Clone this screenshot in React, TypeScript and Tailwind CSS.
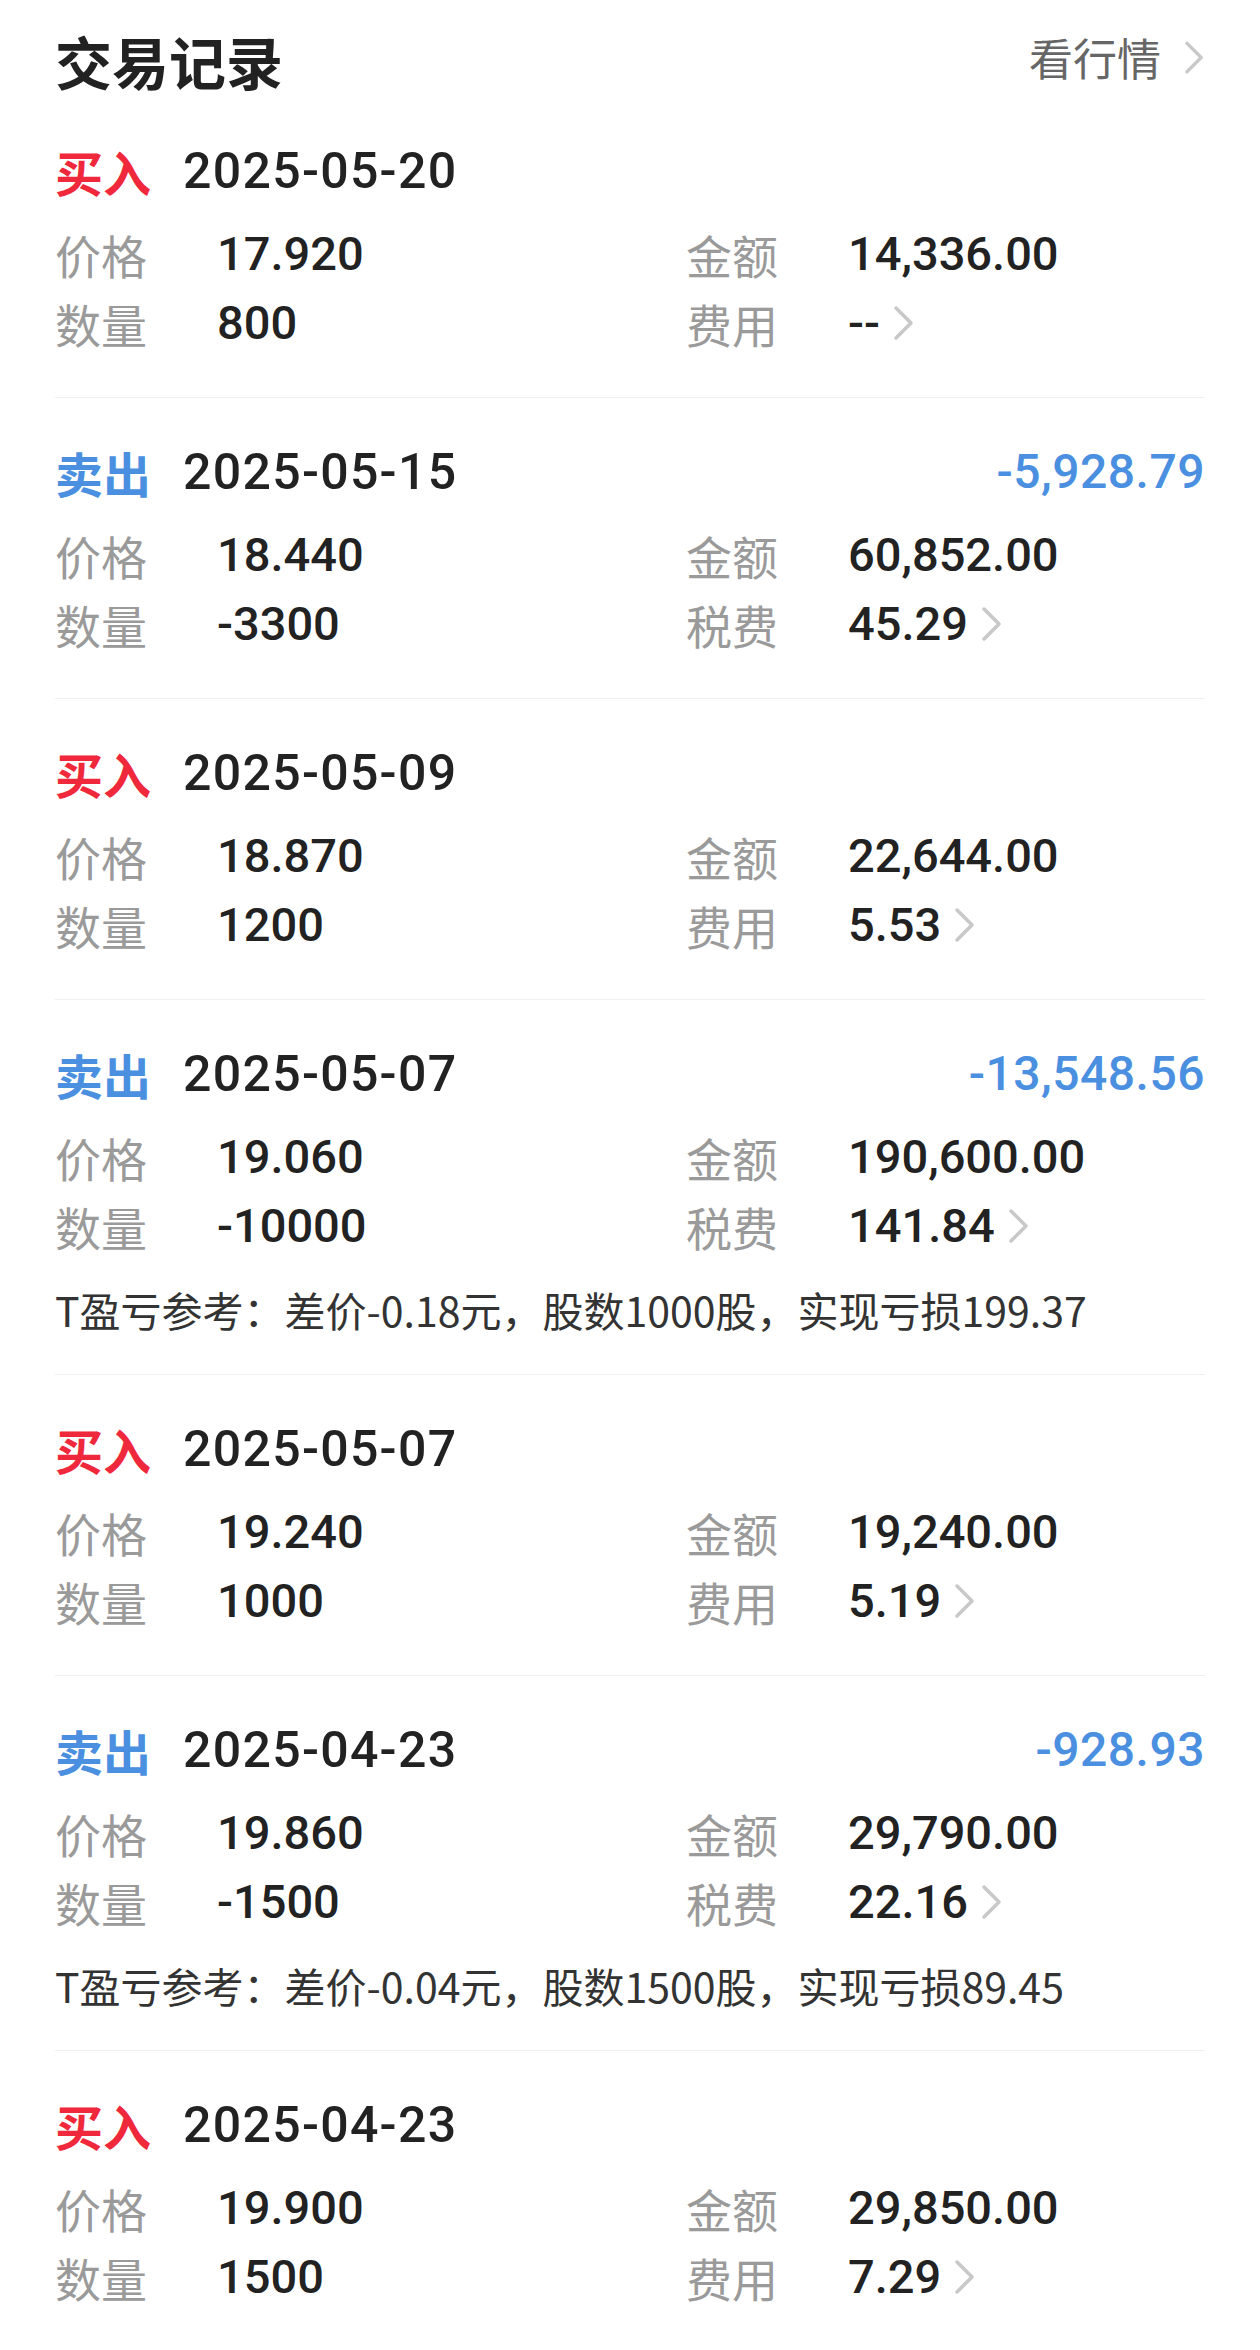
import React from "react";

type Trade = {
  side: "buy" | "sell";
  date: string;
  pnl?: string;
  price: string;
  qty: string;
  amount: string;
  fee: string;
  note?: string;
};

const trades: Trade[] = [
  { side: "buy", date: "2025-05-20", price: "17.920", qty: "800", amount: "14,336.00", fee: "--" },
  { side: "sell", date: "2025-05-15", pnl: "-5,928.79", price: "18.440", qty: "-3300", amount: "60,852.00", fee: "45.29" },
  { side: "buy", date: "2025-05-09", price: "18.870", qty: "1200", amount: "22,644.00", fee: "5.53" },
  {
    side: "sell",
    date: "2025-05-07",
    pnl: "-13,548.56",
    price: "19.060",
    qty: "-10000",
    amount: "190,600.00",
    fee: "141.84",
    note: "T盈亏参考：差价-0.18元，股数1000股，实现亏损199.37",
  },
  { side: "buy", date: "2025-05-07", price: "19.240", qty: "1000", amount: "19,240.00", fee: "5.19" },
  {
    side: "sell",
    date: "2025-04-23",
    pnl: "-928.93",
    price: "19.860",
    qty: "-1500",
    amount: "29,790.00",
    fee: "22.16",
    note: "T盈亏参考：差价-0.04元，股数1500股，实现亏损89.45",
  },
  { side: "buy", date: "2025-04-23", price: "19.900", qty: "1500", amount: "29,850.00", fee: "7.29" },
];

const Chevron = ({ w = 23, h = 36 }: { w?: number; h?: number }) => (
  <svg width={w} height={h} viewBox="0 0 23 36" fill="none" className="shrink-0">
    <polyline points="4,3 19,18 4,33" stroke="#c8c8c8" strokeWidth="3.5" strokeLinecap="round" strokeLinejoin="round" />
  </svg>
);

const Cell = ({ label, value, arrow }: { label: string; value: string; arrow?: boolean }) => (
  <div className="flex items-center h-[69px]">
    <span className="w-[162px] shrink-0 text-[46px] leading-none text-[#9a9a9a] font-['Noto_Sans_CJK_SC',sans-serif]">
      {label}
    </span>
    <span className="text-[47px] leading-none font-medium text-[#222222]">{value}</span>
    {arrow && (
      <span className="ml-[12px] flex items-center">
        <Chevron />
      </span>
    )}
  </div>
);

const TradeRow = ({ t, first }: { t: Trade; first: boolean }) => {
  const isBuy = t.side === "buy";
  return (
    <div className={`${first ? "pt-[21px]" : "pt-[44px]"} pb-[40px] border-b border-[#efefef]`}>
      <div className="flex items-center h-[60px]">
        <span
          className={`text-[48px] leading-none font-bold font-['Noto_Sans_CJK_SC',sans-serif] ${
            isBuy ? "text-[#f0283c]" : "text-[#4a8fe0]"
          }`}
        >
          {isBuy ? "买入" : "卖出"}
        </span>
        <span className="ml-[32px] text-[50px] leading-none font-medium text-[#222222] tracking-[1.3px]">
          {t.date}
        </span>
        {t.pnl && (
          <span className="ml-auto text-[48px] leading-none font-medium text-[#4a8fe0] tracking-[0.5px]">{t.pnl}</span>
        )}
      </div>
      <div className="mt-[18px] grid grid-cols-[631px_1fr]">
        <Cell label="价格" value={t.price} />
        <Cell label="金额" value={t.amount} />
        <Cell label="数量" value={t.qty} />
        <Cell label={isBuy ? "费用" : "税费"} value={t.fee} arrow />
      </div>
      {t.note && (
        <div className="mt-[24px] h-[50px] flex items-center text-[41px] leading-none text-[#333333] font-['Noto_Sans_CJK_SC',sans-serif] whitespace-nowrap">
          {t.note}
        </div>
      )}
    </div>
  );
};

export default function App() {
  return (
    <div className="w-[1260px] min-h-[2350px] bg-white px-[55px] font-['Roboto','Noto_Sans_CJK_SC',sans-serif]">
      <div className="flex items-center justify-between h-[120px]">
        <h1 className="text-[57px] leading-none font-bold text-[#222222] font-['Noto_Sans_CJK_SC',sans-serif]">
          交易记录
        </h1>
        <div className="flex items-center gap-[22px] -mt-[6px]">
          <span className="text-[44px] leading-none text-[#666666] font-['Noto_Sans_CJK_SC',sans-serif]">看行情</span>
          <Chevron w={22} h={35} />
        </div>
      </div>
      {trades.map((t, i) => (
        <TradeRow key={i} t={t} first={i === 0} />
      ))}
    </div>
  );
}
